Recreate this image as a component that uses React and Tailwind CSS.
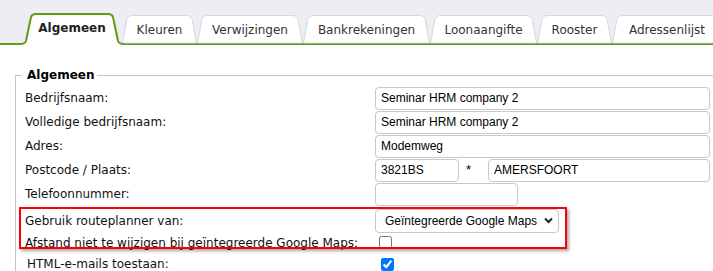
import React from 'react';

const tabs = [
  { label: 'Algemeen', w: 100, active: true },
  { label: 'Kleuren', w: 75 },
  { label: 'Verwijzingen', w: 106 },
  { label: 'Bankrekeningen', w: 127 },
  { label: 'Loonaangifte', w: 107 },
  { label: 'Rooster', w: 75 },
  { label: 'Adressenlijst', w: 110 },
];

const Tab = ({ label, w, active }) => {
  if (active) {
    const h = 32;
    return (
      <div className="relative z-10 -mb-[2px] flex shrink-0 items-center justify-center pb-[3px]" style={{ width: w, height: h }}>
        <svg className="absolute inset-0 overflow-visible" width={w} height={h}>
          <path d={`M-2 ${h} L-2 31 Q3 31 4 28 L9 4 Q10 1 14 1 L${w - 14} 1 Q${w - 10} 1 ${w - 9} 4 L${w - 4} 28 Q${w - 3} 31 ${w + 2} 31 L${w + 2} ${h} Z`} fill="#fff" />
          <path d={`M-2 31 Q3 31 4 28 L9 4 Q10 1 14 1 L${w - 14} 1 Q${w - 10} 1 ${w - 9} 4 L${w - 4} 28 Q${w - 3} 31 ${w + 2} 31`} fill="none" stroke="#5e9c12" strokeWidth="2" />
        </svg>
        <span className="relative text-[12px] font-bold text-[#222]">{label}</span>
      </div>
    );
  }
  const h = 28;
  return (
    <div className="relative flex shrink-0 items-center justify-center pt-[1px]" style={{ width: w, height: h }}>
      <svg className="absolute inset-0 overflow-visible" width={w} height={h}>
        <path d={`M0.5 ${h} L5 4 Q6 0.5 10 0.5 L${w - 10} 0.5 Q${w - 6} 0.5 ${w - 5} 4 L${w - 0.5} ${h} Z`} fill="#fff" stroke="#d3dae2" />
      </svg>
      <span className="relative text-[12px] text-[#333]">{label}</span>
    </div>
  );
};

const Row = ({ label, children, className = 'h-[24px]' }) => (
  <div className={`flex items-center ${className}`}>
    <div className="w-[350px] shrink-0">{label}</div>
    <div className="flex items-center">{children}</div>
  </div>
);

const inputCls = "h-[23px] rounded-[4px] border border-[#c8c8c8] bg-white px-[5px] text-[12px] text-black outline-none [font-family:'Liberation_Sans',Arial,sans-serif]";

export default function App() {
  return (
    <div className="relative h-[271px] w-[713px] overflow-hidden bg-white [font-family:'DejaVu_Sans',Verdana,sans-serif] text-[12px] text-[#111]">
      <div className="flex h-[43px] items-end bg-[#eceef1] pl-[22px]">
        {tabs.map((t) => (
          <Tab key={t.label} {...t} />
        ))}
      </div>
      <div className="h-[2px] bg-[#5e9c12]" />

      <fieldset className="ml-[15px] mt-[22px] w-[760px] border border-[#c4c4c4] pb-[10px] pl-[9px] pt-[3px]">
        <legend className="-ml-[3px] pl-[5px] pr-[3px] text-[12px] font-bold leading-[16px] text-black">Algemeen</legend>
        <Row label="Bedrijfsnaam:">
          <input className={`${inputCls} w-[335px]`} defaultValue="Seminar HRM company 2" />
        </Row>
        <Row label="Volledige bedrijfsnaam:">
          <input className={`${inputCls} w-[335px]`} defaultValue="Seminar HRM company 2" />
        </Row>
        <Row label="Adres:">
          <input className={`${inputCls} w-[335px]`} defaultValue="Modemweg" />
        </Row>
        <Row label="Postcode / Plaats:">
          <input className={`${inputCls} w-[84px]`} defaultValue="3821BS" />
          <span className="ml-[7px] w-[22px] text-[13px] text-black [font-family:'Liberation_Sans',Arial,sans-serif]">*</span>
          <input className={`${inputCls} w-[222px]`} defaultValue="AMERSFOORT" />
        </Row>
        <Row label="Telefoonnummer:">
          <input className={`${inputCls} w-[143px]`} defaultValue="" />
        </Row>
        <Row label="Gebruik routeplanner van:" className="mt-[2px] h-[25px]">
          <div className="relative">
            <select className="h-[24px] w-[184px] appearance-none rounded-[4px] border border-[#c8c8c8] bg-white pl-[9px] text-[12px] text-black outline-none [font-family:'Liberation_Sans',Arial,sans-serif]">
              <option>Geïntegreerde Google Maps</option>
            </select>
            <svg className="pointer-events-none absolute right-[6px] top-[8px]" width="9" height="7" viewBox="0 0 9 7">
              <path d="M1 1.5 L4.5 5 L8 1.5" fill="none" stroke="#222" strokeWidth="2" />
            </svg>
          </div>
        </Row>
        <Row label="Afstand niet te wijzigen bij geïntegreerde Google Maps:" className="h-[19px]">
          <input type="checkbox" className="m-0 ml-[4px] h-[13px] w-[13px]" />
        </Row>
        <Row label="HTML-e-mails toestaan:" className="ml-[2px] h-[24px]">
          <input type="checkbox" defaultChecked className="m-0 ml-[4px] h-[13px] w-[13px]" />
        </Row>
      </fieldset>

      <div className="pointer-events-none absolute left-[19px] top-[207px] h-[42px] w-[548px] border-2 border-[#ff0000] shadow-[2px_2px_3px_rgba(0,0,0,0.35)]" />
    </div>
  );
}
